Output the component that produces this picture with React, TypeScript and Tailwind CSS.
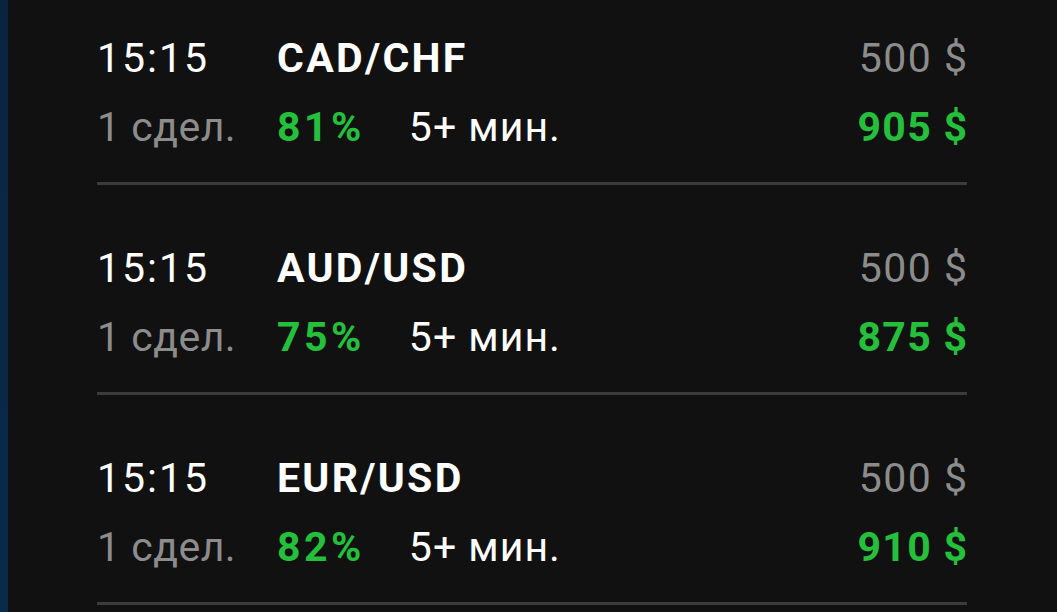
import React from 'react';

type Deal = {
  time: string;
  pair: string;
  percent: string;
  stake: string;
  payout: string;
};

const deals: Deal[] = [
  { time: '15:15', pair: 'CAD/CHF', percent: '81%', stake: '500 $', payout: '905 $' },
  { time: '15:15', pair: 'AUD/USD', percent: '75%', stake: '500 $', payout: '875 $' },
  { time: '15:15', pair: 'EUR/USD', percent: '82%', stake: '500 $', payout: '910 $' },
];

const DealRow: React.FC<{ deal: Deal; first: boolean }> = ({ deal, first }) => (
  <div className={first ? 'flex flex-col' : 'flex flex-col mt-[59px]'}>
    <div className="flex items-center h-12 text-[41px] leading-none">
      <span className="w-[180px] text-white font-normal tracking-[2px]">{deal.time}</span>
      <span className="text-white font-bold tracking-[2.3px]">{deal.pair}</span>
      <span className="ml-auto text-[#8c8c8c] font-normal tracking-[1.5px] -mr-[1.5px]">{deal.stake}</span>
    </div>
    <div className="flex items-center h-12 mt-[21px] text-[41px] leading-none">
      <span className="w-[180px] text-[#8c8c8c] tracking-[0.5px]">1 сдел.</span>
      <span className="text-[#24c03c] font-bold tracking-[3.5px]">{deal.percent}</span>
      <span className="ml-[44px] text-white tracking-[1px]">5+ мин.</span>
      <span className="ml-auto text-[#24c03c] font-bold tracking-[1.3px] -mr-[1.3px]">{deal.payout}</span>
    </div>
    <div className="mt-[31px] h-[3px] bg-[#3c3c3c]" />
  </div>
);

export default function App() {
  return (
    <div
      className="flex h-[612px] w-full overflow-hidden bg-[#111111]"
      style={{ fontFamily: 'Roboto, "Noto Sans", sans-serif' }}
    >
      <div className="w-2 shrink-0 bg-gradient-to-b from-[#0a2440] to-[#072b4a]" />
      <div className="flex-1 pt-[34px] pl-[89px] pr-[90px]">
        {deals.map((d, i) => (
          <DealRow key={d.pair} deal={d} first={i === 0} />
        ))}
      </div>
    </div>
  );
}
